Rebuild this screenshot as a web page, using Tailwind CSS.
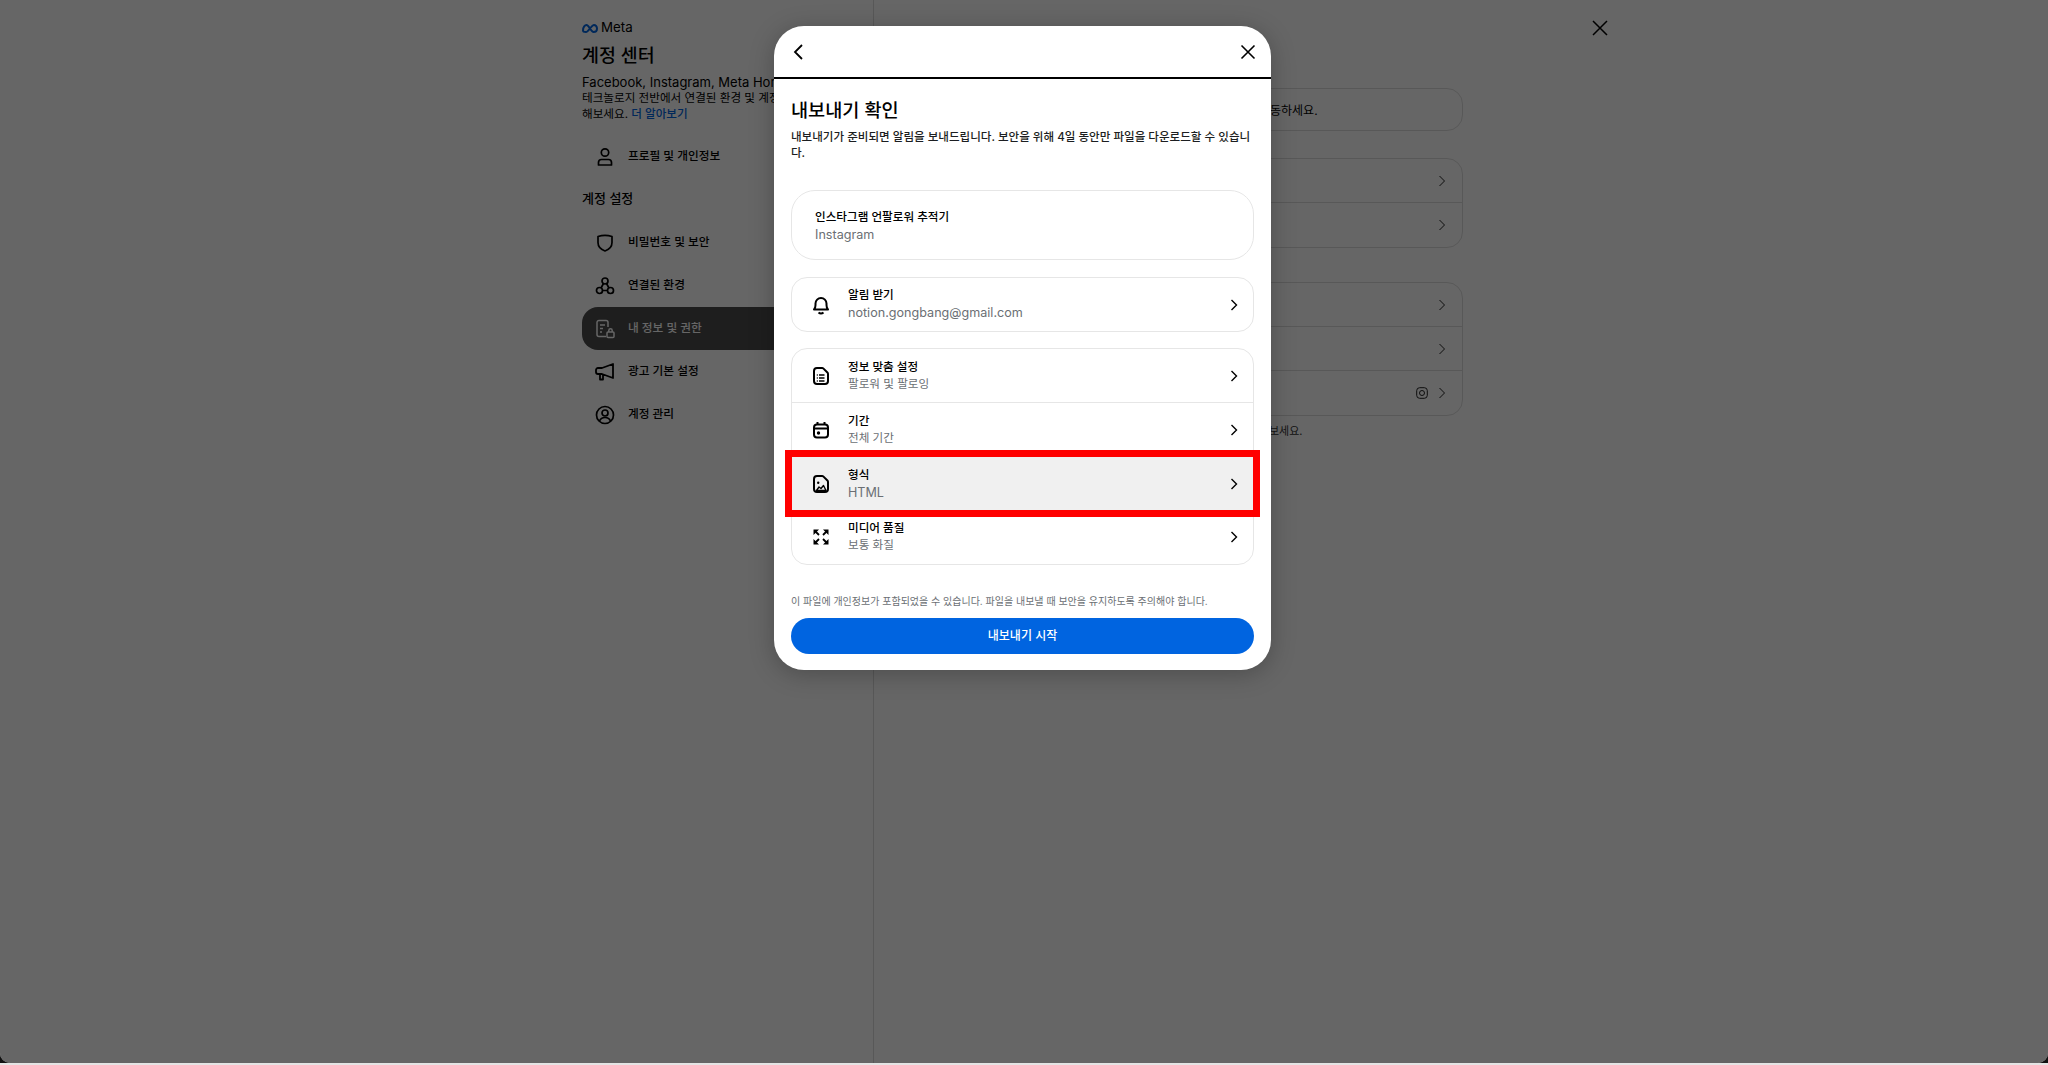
<!DOCTYPE html>
<html lang="ko">
<head>
<meta charset="utf-8">
<script src="https://cdn.jsdelivr.net/npm/@tailwindcss/browser@4"></script>
</head>
<body class="m-0 bg-white">
<div class="relative h-[1065px] w-[2048px] overflow-hidden bg-[#e4e4e4] text-black font-['Inter','Noto_Sans_CJK_KR',sans-serif]">
  <div class="relative h-[1063px] bg-[#111111]">
  <div class="h-full overflow-hidden rounded-b-[10px] bg-white flex">
    <!-- left nav -->
    <aside class="ml-[582px] w-[292px] shrink-0 border-r border-[#dddddd] pt-[20px] h-full">
      <div class="flex items-center gap-[3px] h-[16px]">
        <svg width="16" height="11" viewBox="0 0 32 20" fill="none" stroke="#0064e0" stroke-width="4"><path d="M2 14C2 7 6 3 9 3c5 0 9 14 14 14 4 0 7-3 7-7s-3-7-6-7c-5 0-11 14-16 14-4 0-6-1-6-3z"/></svg>
        <span class="text-[13.3px] leading-none font-normal">Meta</span>
      </div>
      <h1 class="mt-[6px] text-[18.4px] leading-[26px] font-medium whitespace-nowrap">계정 센터</h1>
      <div class="mt-[6px] text-[11.6px] leading-[16px] whitespace-nowrap">
        <p class="text-[13px]">Facebook, Instagram, Meta Horizon</p>
        <p>테크놀로지 전반에서 연결된 환경 및 계정 설정을</p>
        <p>해보세요. <span class="font-medium text-[#0064e0]">더 알아보기</span></p>
      </div>
      <nav class="mt-[13px]">
        <a class="flex h-[43px] items-center pl-[13px] text-[11.7px] font-medium">
          <svg width="20" height="20" viewBox="0 0 20 20" fill="none" stroke="black" stroke-width="1.7"><circle cx="10" cy="5.5" r="3.7"/><path d="M3.5 18v-2.500a3 3 0 0 1 3-3h7a3 3 0 0 1 3 3V18z" stroke-linejoin="round"/></svg>
          <span class="ml-[13px]">프로필 및 개인정보</span>
        </a>
        <h2 class="mt-[9px] h-[34px] text-[13px] leading-[23px] font-medium">계정 설정</h2>
        <a class="flex h-[43px] items-center pl-[13px] text-[11.7px] font-medium">
          <svg width="20" height="20" viewBox="0 0 20 20" fill="none" stroke="black" stroke-width="1.7"><path d="M3 3.500c4.500-1.400 9.500-1.400 14 0v6c0 4-3 7-7 8.500-4-1.500-7-4.500-7-8.500z" stroke-linejoin="round"/></svg>
          <span class="ml-[13px]">비밀번호 및 보안</span>
        </a>
        <a class="flex h-[43px] items-center pl-[13px] text-[11.7px] font-medium">
          <svg width="20" height="20" viewBox="0 0 20 20" fill="none" stroke="black" stroke-width="1.7"><circle cx="10" cy="5" r="3"/><circle cx="4.500" cy="14.500" r="3"/><circle cx="15.500" cy="14.500" r="3"/><path d="M8.500 7.500 6 12M11.500 7.500 14 12M7.500 14.500h5"/></svg>
          <span class="ml-[13px]">연결된 환경</span>
        </a>
        <a class="flex h-[43px] items-center rounded-l-[16px] bg-[#4b4b4b] pl-[13px] text-[11.7px] font-medium text-white -mr-[1px]">
          <svg width="20" height="20" viewBox="0 0 20 20" fill="none" stroke="white" stroke-width="1.5"><path d="M11 17.500H4a2 2 0 0 1-2-2V3.500a2 2 0 0 1 2-2h7a2 2 0 0 1 2 2V8M5 6h5M5 9.500h3M5 13h2"/><rect x="12" y="13" width="7" height="5.500" rx="1"/><path d="M13.800 13v-1.500a1.700 1.700 0 0 1 3.400 0V13"/></svg>
          <span class="ml-[13px]">내 정보 및 권한</span>
        </a>
        <a class="flex h-[43px] items-center pl-[13px] text-[11.7px] font-medium">
          <svg width="20" height="20" viewBox="0 0 20 20" fill="none" stroke="black" stroke-width="1.8" stroke-linejoin="round"><path d="M18 2 7 6H3a2 2 0 0 0-2 2v2a2 2 0 0 0 2 2h4l11 4zM5 12v5.500h3V13"/></svg>
          <span class="ml-[13px]">광고 기본 설정</span>
        </a>
        <a class="flex h-[43px] items-center pl-[13px] text-[11.7px] font-medium">
          <svg width="20" height="20" viewBox="0 0 20 20" fill="none" stroke="black" stroke-width="1.7"><circle cx="10" cy="10" r="8.500"/><circle cx="10" cy="8" r="3"/><path d="M4.500 16c1-2.500 3-3.500 5.500-3.500s4.500 1 5.500 3.500"/></svg>
          <span class="ml-[13px]">계정 관리</span>
        </a>
      </nav>
    </aside>
    <!-- right content -->
    <main class="ml-[31px] w-[558px] pt-[88px] text-[12px]">
      <div class="flex h-[43px] items-center rounded-[16px] border border-[#dddddd] pl-[364px] pt-[2px]">동하세요.</div>
      <div class="mt-[27px] rounded-[16px] border border-[#dddddd] divide-y divide-[#dddddd]">
        <div class="flex h-[44px] items-center justify-end pr-[14px]"><svg width="12" height="12" viewBox="0 0 12 12" fill="none" stroke="#222222" stroke-width="1"><path d="m3.500 1 5 5-5 5"/></svg></div>
        <div class="flex h-[44px] items-center justify-end pr-[14px]"><svg width="12" height="12" viewBox="0 0 12 12" fill="none" stroke="#222222" stroke-width="1"><path d="m3.500 1 5 5-5 5"/></svg></div>
      </div>
      <div class="mt-[34px] rounded-[16px] border border-[#dddddd] divide-y divide-[#dddddd]">
        <div class="flex h-[44px] items-center justify-end pr-[14px]"><svg width="12" height="12" viewBox="0 0 12 12" fill="none" stroke="#222222" stroke-width="1"><path d="m3.500 1 5 5-5 5"/></svg></div>
        <div class="flex h-[44px] items-center justify-end pr-[14px]"><svg width="12" height="12" viewBox="0 0 12 12" fill="none" stroke="#222222" stroke-width="1"><path d="m3.500 1 5 5-5 5"/></svg></div>
        <div class="flex h-[44px] items-center justify-end gap-[8px] pr-[14px]">
          <svg width="12" height="12" viewBox="0 0 12 12" fill="none" stroke="#222222" stroke-width="1"><rect x="0.700" y="0.700" width="10.600" height="10.600" rx="3"/><circle cx="6" cy="6" r="2.500"/></svg>
          <svg width="12" height="12" viewBox="0 0 12 12" fill="none" stroke="#222222" stroke-width="1"><path d="m3.500 1 5 5-5 5"/></svg>
        </div>
      </div>
      <p class="mt-[7px] pl-[364px] text-[11px] leading-[16px] text-[#333333]">보세요.</p>
    </main>
    <svg class="absolute left-[1592px] top-[20px]" width="16" height="16" viewBox="0 0 16 16" fill="none" stroke="black" stroke-width="1.5"><path d="m1 1 14 14M15 1 1 15"/></svg>
  </div>
  <!-- dim layer -->
  <div class="absolute inset-0 rounded-b-[10px] bg-black/60"></div>
  </div>
  <!-- dialog -->
  <section class="absolute left-[774px] top-[26px] flex h-[644px] w-[497px] flex-col overflow-hidden rounded-[30px] bg-white shadow-[0_4px_24px_rgba(0,0,0,0.25)]">
    <header class="flex h-[53px] shrink-0 items-center justify-between border-b-2 border-black pl-[18px] pr-[15px]">
      <svg width="12" height="16" viewBox="0 0 12 16" fill="none" stroke="black" stroke-width="1.800"><path d="M10 1 3 8l7 7"/></svg>
      <svg width="16" height="16" viewBox="0 0 16 16" fill="none" stroke="black" stroke-width="1.600"><path d="m1.500 1.500 13 13M14.500 1.500l-13 13"/></svg>
    </header>
    <div class="flex flex-col px-[17px]">
      <h2 class="mt-[19px] text-[18.6px] leading-[24px] font-medium">내보내기 확인</h2>
      <p class="mt-[7px] break-all text-[11.56px] leading-[16px] font-medium text-[#1c1e21]">내보내기가 준비되면 알림을 보내드립니다. 보안을 위해 4일 동안만 파일을 다운로드할 수 있습니다.</p>
      <div class="mt-[29px] flex h-[70px] flex-col justify-center rounded-[24px] border border-[#e6e6e6] pl-[23px] pt-[2px]">
        <span class="text-[11.6px] leading-[18px] font-medium">인스타그램 언팔로워 추적기</span>
        <span class="text-[12.6px] leading-[18px] text-[#6b6f74]">Instagram</span>
      </div>
      <div class="mt-[17px] flex h-[55px] items-center rounded-[16px] border border-[#e6e6e6] pl-[19px] pr-[13px]">
        <svg width="20" height="20" viewBox="0 0 20 20" fill="none" stroke="black" stroke-width="2" stroke-linejoin="round"><path d="M3 14.500c1.200-1.200 1.500-2.500 1.500-4.500v-1.500a5.500 5.500 0 0 1 11 0V10c0 2 .3 3.300 1.500 4.500z"/><path d="M7.500 17.500c1.500 1.300 3.500 1.300 5 0"/></svg>
        <div class="ml-[17px] mb-[1px] flex-1 flex flex-col">
          <span class="text-[11.6px] leading-[17px] font-medium">알림 받기</span>
          <span class="text-[12.6px] leading-[17px] text-[#6b6f74]">notion.gongbang@gmail.com</span>
        </div>
        <svg width="12" height="12" viewBox="0 0 12 12" fill="none" stroke="black" stroke-width="1.400"><path d="m3.500 1 5 5-5 5"/></svg>
      </div>
      <div class="mt-[16px] rounded-[16px] border border-[#e6e6e6] divide-y divide-[#e6e6e6]">
        <div class="flex h-[54px] items-center pl-[19px] pr-[13px]">
          <svg width="20" height="20" viewBox="0 0 20 20" fill="none" stroke="black" stroke-width="2" stroke-linejoin="round"><path d="M6 2h5a2 2 0 0 1 1.500.6l3.900 3.900a2 2 0 0 1 .6 1.500v7a3 3 0 0 1-3 3H6a3 3 0 0 1-3-3V5a3 3 0 0 1 3-3z"/><path stroke-width="1.400" d="M8 9h5.500M8 12h5.500M8 15h5.500M5.800 9h1M5.800 12h1M5.800 15h1"/></svg>
          <div class="ml-[17px] flex-1 flex flex-col">
            <span class="text-[11.6px] leading-[17px] font-medium">정보 맞춤 설정</span>
            <span class="text-[11.6px] leading-[17px] text-[#6b6f74]">팔로워 및 팔로잉</span>
          </div>
          <svg width="12" height="12" viewBox="0 0 12 12" fill="none" stroke="black" stroke-width="1.400"><path d="m3.500 1 5 5-5 5"/></svg>
        </div>
        <div class="flex h-[54px] items-center pl-[19px] pr-[13px]">
          <svg width="20" height="20" viewBox="0 0 20 20" fill="none" stroke="black" stroke-width="2"><rect x="3" y="4.500" width="14" height="13" rx="3"/><path d="M3 8.500h14M6.500 2v3M13.500 2v3"/><circle cx="7.500" cy="13" r="1.700" fill="black" stroke="none"/></svg>
          <div class="ml-[17px] flex-1 flex flex-col">
            <span class="text-[11.6px] leading-[17px] font-medium">기간</span>
            <span class="text-[11.6px] leading-[17px] text-[#6b6f74]">전체 기간</span>
          </div>
          <svg width="12" height="12" viewBox="0 0 12 12" fill="none" stroke="black" stroke-width="1.400"><path d="m3.500 1 5 5-5 5"/></svg>
        </div>
        <div class="relative flex h-[54px] items-center bg-[#f0f0f0] pl-[19px] pr-[13px]">
          <svg width="20" height="20" viewBox="0 0 20 20" fill="none" stroke="black" stroke-width="2" stroke-linejoin="round"><path d="M6 2h5a2 2 0 0 1 1.500.6l3.900 3.900a2 2 0 0 1 .6 1.500v7a3 3 0 0 1-3 3H6a3 3 0 0 1-3-3V5a3 3 0 0 1 3-3z"/><circle cx="7.200" cy="8.800" r="1.200" fill="black" stroke="none"/><path d="M5.500 16.500 8 13l2 1.500 2.500-3 2.500 5z" stroke-width="1.400"/></svg>
          <div class="ml-[17px] flex-1 flex flex-col">
            <span class="text-[11.6px] leading-[17px] font-medium">형식</span>
            <span class="text-[12.6px] leading-[17px] text-[#6b6f74]">HTML</span>
          </div>
          <svg width="12" height="12" viewBox="0 0 12 12" fill="none" stroke="black" stroke-width="1.400"><path d="m3.500 1 5 5-5 5"/></svg>
          <div class="absolute -left-[7px] -right-[7px] -top-[7px] -bottom-[7px] border-[7px] border-[#ff0000]"></div>
        </div>
        <div class="flex h-[52.5px] items-center pl-[19px] pr-[13px]">
          <svg width="20" height="20" viewBox="0 0 20 20" fill="black" stroke="black" stroke-width="1.800"><path stroke="none" d="M2.500 2.500H8L2.500 8zM17.500 2.500V8L12 2.500zM2.500 17.500V12L8 17.500zM17.500 17.500H12L17.500 12z"/><path d="m4 4 4 4M16 4l-4 4M4 16l4-4M16 16l-4-4"/></svg>
          <div class="ml-[17px] flex-1 flex flex-col">
            <span class="text-[11.6px] leading-[17px] font-medium">미디어 품질</span>
            <span class="text-[11.6px] leading-[17px] text-[#6b6f74]">보통 화질</span>
          </div>
          <svg width="12" height="12" viewBox="0 0 12 12" fill="none" stroke="black" stroke-width="1.400"><path d="m3.500 1 5 5-5 5"/></svg>
        </div>
      </div>
      <p class="mt-[28.5px] text-[10px] leading-[16px] text-[#6b6f74]">이 파일에 개인정보가 포함되었을 수 있습니다. 파일을 내보낼 때 보안을 유지하도록 주의해야 합니다.</p>
      <button class="mt-[9px] h-[36px] rounded-full bg-[#0064e0] text-[12px] font-medium text-white">내보내기 시작</button>
    </div>
  </section>
</div>
</body>
</html>
